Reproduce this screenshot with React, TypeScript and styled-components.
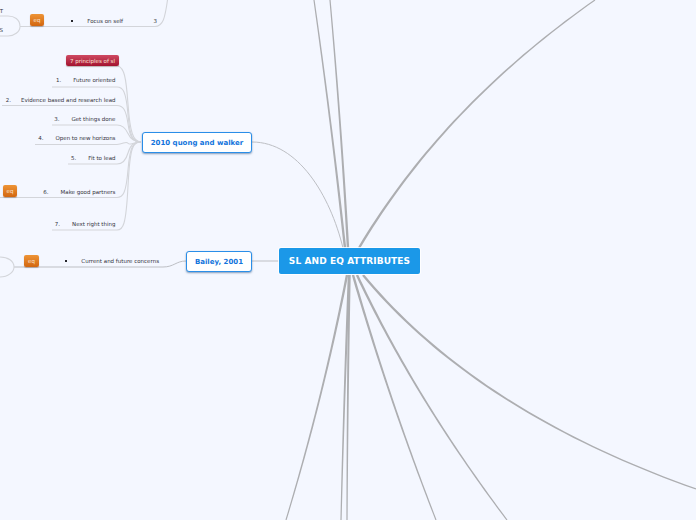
import React from "react";
import styled, { createGlobalStyle } from "styled-components";

const Global = createGlobalStyle`
  html, body { margin: 0; padding: 0; background: #f4f7ff; }
  #root { width: 696px; height: 520px; }
`;

const Canvas = styled.div`
  position: relative;
  width: 696px;
  height: 520px;
  overflow: hidden;
  background: #f4f7ff;
  font-family: "DejaVu Sans", Verdana, sans-serif;
`;

const Lines = styled.svg`
  position: absolute;
  inset: 0;
`;

const Root = styled.div`
  position: absolute;
  left: 279px;
  top: 248px;
  width: 141px;
  height: 26px;
  display: flex;
  align-items: center;
  justify-content: center;
  box-sizing: border-box;
  background: #1b98e8;
  border-radius: 2px;
  box-shadow: 0 0 0 1px rgba(255, 255, 255, 0.85);
  color: #fff;
  font-size: 9px;
  font-weight: 700;
  letter-spacing: 0.1px;
  white-space: nowrap;
`;

const Main = styled.div<{ $x: number; $y: number; $w: number }>`
  position: absolute;
  left: ${(p) => p.$x}px;
  top: ${(p) => p.$y}px;
  width: ${(p) => p.$w}px;
  height: 21px;
  display: flex;
  align-items: center;
  justify-content: center;
  box-sizing: border-box;
  background: #fff;
  border: 1.5px solid #2a8ee8;
  border-radius: 3px;
  box-shadow: 0 1px 2px rgba(40, 80, 130, 0.55);
  color: #1274dc;
  font-size: 7px;
  font-weight: 700;
  white-space: nowrap;
`;

const Leaf = styled.div<{ $r: number; $y: number }>`
  position: absolute;
  right: ${(p) => 696 - p.$r}px;
  top: ${(p) => p.$y}px;
  color: #33333c;
  font-size: 5.5px;
  line-height: 8px;
  white-space: nowrap;
`;

const Num = styled.span<{ $gap: number }>`
  margin-right: ${(p) => p.$gap}px;
`;

const Bullet = styled.span`
  display: inline-block;
  width: 2px;
  height: 2px;
  margin-right: 14px;
  vertical-align: 1px;
  background: #26262c;
`;

const Tag = styled.div<{ $x: number; $y: number; $w: number; $red?: boolean }>`
  position: absolute;
  left: ${(p) => p.$x}px;
  top: ${(p) => p.$y}px;
  width: ${(p) => p.$w}px;
  height: ${(p) => (p.$red ? 11 : 12)}px;
  display: flex;
  align-items: center;
  justify-content: center;
  border-radius: 2px;
  background: ${(p) =>
    p.$red ? "linear-gradient(#cf4a62, #a3132f)" : "linear-gradient(#ee9436, #d2660f)"};
  box-shadow: 0 1px 1px rgba(90, 60, 40, 0.35);
  color: #f9e2d2;
  font-size: 5.5px;
  white-space: nowrap;
`;

type Pt = [number, number];

// A branch that narrows as it leaves the root: a quadratic curve outlined as a filled shape.
function taper(a: Pt, c: Pt, b: Pt, w0 = 2.4, w1 = 1.2): string {
  const left: string[] = [];
  const right: string[] = [];
  const steps = 40;
  for (let i = 0; i <= steps; i++) {
    const t = i / steps;
    const u = 1 - t;
    const x = u * u * a[0] + 2 * u * t * c[0] + t * t * b[0];
    const y = u * u * a[1] + 2 * u * t * c[1] + t * t * b[1];
    const dx = 2 * u * (c[0] - a[0]) + 2 * t * (b[0] - c[0]);
    const dy = 2 * u * (c[1] - a[1]) + 2 * t * (b[1] - c[1]);
    const len = Math.hypot(dx, dy) || 1;
    const w = (w0 + (w1 - w0) * t) / 2;
    left.push(`${(x - (dy / len) * w).toFixed(2)} ${(y + (dx / len) * w).toFixed(2)}`);
    right.unshift(`${(x + (dy / len) * w).toFixed(2)} ${(y - (dx / len) * w).toFixed(2)}`);
  }
  return `M${left.join("L")}L${right.join("L")}Z`;
}

const branches: [Pt, Pt, Pt][] = [
  [[345, 248], [331.5, 123], [314, 0]],
  [[348, 248], [341, 123], [330, 0]],
  [[359, 248], [443, 106.5], [595, 0]],
  [[347, 275], [323.5, 396], [286, 520]],
  [[349, 275], [344, 396], [341, 520]],
  [[349.5, 275], [347.5, 396], [347, 520]],
  [[353, 275], [388.5, 398], [436, 520]],
  [[357, 275], [415, 398], [507, 520]],
  [[363, 275], [476.5, 411.5], [696, 489]],
];

const thin = [
  "M279 261 H252",
  "M252 142 C298 142 330 195 343 248",
  "M186 261 C176 261 174 267 163 267 H14",
];

const leafRows: [number, number][] = [
  [87, 52],
  [105.5, 2],
  [125, 52],
  [144.5, 35],
  [164, 68],
  [197.5, 0],
  [230, 52],
];

const leafPath = ([y, x]: [number, number]) => {
  const s = y < 142 ? 1 : -1;
  const my = (y + 142) / 2;
  return `M${x} ${y} H117 C123 ${y} 126 ${y + 4 * s} 128 ${my} S133 142 141 142`;
};

const soft = [
  "M118 66 C124 68 126 76 128 104 S133 142 141 142",
  "M20 26.5 H155 C163 26.5 165 18 167.5 0",
  "M20 26.5 C20 19 14 16 8 16 H0",
  "M20 26.5 C20 32 14 36 8 36 H0",
  "M14 267 C14 261 8 257 0 257",
  "M14 267 C14 272 8 277 0 277",
];

const leaves: [string, string, number][] = [
  ["1.", "Future oriented", 76],
  ["2.", "Evidence based and research lead", 96],
  ["3.", "Get things done", 115],
  ["4.", "Open to new horizons", 134],
  ["5.", "Fit to lead", 154],
  ["6.", "Make good partners", 188],
  ["7.", "Next right thing", 220],
];

export default function App() {
  return (
    <Canvas>
      <Global />
      <Lines width="696" height="520" fill="none">
        {branches.map(([a, c, b]) => (
          <path key={b.join()} d={taper(a, c, b)} fill="#adaeb1" />
        ))}
        {thin.map((d) => (
          <path key={d} d={d} stroke="#bdbfc4" strokeWidth="1" />
        ))}
        {leafRows.map((r) => (
          <path key={r[0]} d={leafPath(r)} stroke="#d3d5da" strokeWidth="1.1" />
        ))}
        {soft.map((d) => (
          <path key={d} d={d} stroke="#d3d5da" strokeWidth="1.1" />
        ))}
      </Lines>
      <Root>SL AND EQ ATTRIBUTES</Root>
      <Main $x={142} $y={132} $w={110}>2010 quong and walker</Main>
      <Main $x={186} $y={251} $w={66}>Bailey, 2001</Main>
      <Tag $x={66} $y={55} $w={53} $red>7 principles of sl</Tag>
      <Tag $x={30} $y={14} $w={14}>eq</Tag>
      <Tag $x={3} $y={185} $w={14}>eq</Tag>
      <Tag $x={24} $y={255} $w={15}>eq</Tag>
      {leaves.map(([n, t, y], i) => (
        <Leaf key={t} $r={115.5} $y={y}>
          <Num $gap={i === 1 ? 10 : 12}>{n}</Num>
          {t}
        </Leaf>
      ))}
      <Leaf $r={123} $y={16.5}>
        <Bullet />Focus on self
      </Leaf>
      <Leaf $r={157} $y={16.5}>3</Leaf>
      <Leaf $r={159} $y={257}>
        <Bullet />Current and future concerns
      </Leaf>
      <Leaf $r={3} $y={7}>T</Leaf>
      <Leaf $r={3} $y={26}>S</Leaf>
    </Canvas>
  );
}
